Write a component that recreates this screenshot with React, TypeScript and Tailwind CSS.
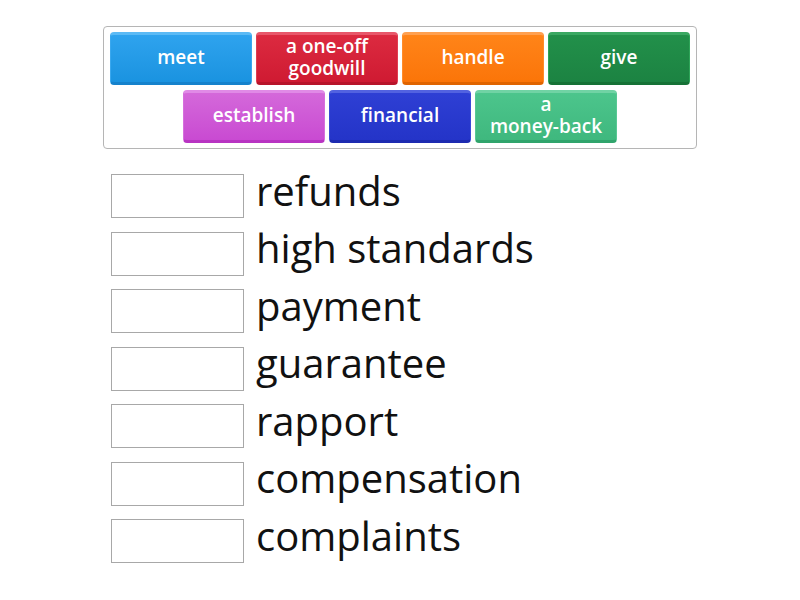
const tiles = [
  [
    { lines: ["meet"], cls: "bg-gradient-to-b from-[#2ea3ee] to-[#1a93e0] border-t-[#5bbaf5] border-x-[#3aa8ef] border-b-[#1582cc]" },
    { lines: ["a one-off", "goodwill"], cls: "bg-gradient-to-b from-[#dc2a40] to-[#cf1a32] border-t-[#e8576a] border-x-[#e03c50] border-b-[#b8142a]" },
    { lines: ["handle"], cls: "bg-gradient-to-b from-[#ff8418] to-[#fb7508] border-t-[#ffa050] border-x-[#ff8c2a] border-b-[#e06400]" },
    { lines: ["give"], cls: "bg-gradient-to-b from-[#22904a] to-[#1c8342] border-t-[#3aa862] border-x-[#2ea458] border-b-[#167236]" },
  ],
  [
    { lines: ["establish"], cls: "bg-gradient-to-b from-[#d468da] to-[#c94ad2] border-t-[#e08ae6] border-x-[#d670dc] border-b-[#b834c2]" },
    { lines: ["financial"], cls: "bg-gradient-to-b from-[#2e3fd4] to-[#2434c8] border-t-[#5262e0] border-x-[#3a4ad8] border-b-[#1c2ab0]" },
    { lines: ["a", "money-back"], cls: "bg-gradient-to-b from-[#4cc58c] to-[#3fb87e] border-t-[#70d3a4] border-x-[#58c894] border-b-[#30a46c]" },
  ],
];

const words = [
  "refunds",
  "high standards",
  "payment",
  "guarantee",
  "rapport",
  "compensation",
  "complaints",
];

function Tile({ lines, cls }: { lines: string[]; cls: string }) {
  return (
    <div
      className={`w-[142px] h-[53px] rounded-[4px] border-t-[3px] border-x border-b-[3px] flex items-center justify-center text-center text-white font-semibold text-[19px] leading-[22px] whitespace-nowrap pb-[3px] ${cls}`}
    >
      <p>
        {lines.map((l, i) => (
          <span key={l}>
            {i > 0 && <br />}
            {l}
          </span>
        ))}
      </p>
    </div>
  );
}

export default function App() {
  return (
    <div className="w-[800px] h-[600px] bg-white font-['Open_Sans',sans-serif]">
      <div className="pt-[26px] px-[103px]">
        <div className="border border-[#b5b5b5] rounded-[4px] px-[6px] pt-[5px] pb-[5px] flex flex-col items-center gap-[5px]">
          {tiles.map((row, i) => (
            <div key={i} className="flex gap-[4px]">
              {row.map((t) => (
                <Tile key={t.lines.join(" ")} {...t} />
              ))}
            </div>
          ))}
        </div>
      </div>

      <div className="mt-[25px] pl-[111px] flex flex-col gap-[13.5px]">
        {words.map((w) => (
          <div key={w} className="flex items-center h-[44px]">
            <div className="w-[133px] h-[44px] border border-[#a8a8a8] bg-white" />
            <span className="ml-[12px] text-[40px] leading-none text-[#111] -mt-[11px]">{w}</span>
          </div>
        ))}
      </div>
    </div>
  );
}
